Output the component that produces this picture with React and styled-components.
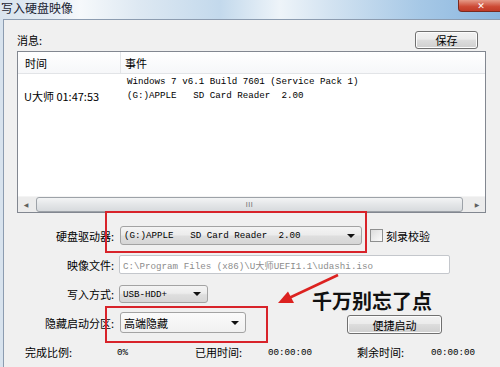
import styled, { createGlobalStyle } from 'styled-components'

const GlobalStyle = createGlobalStyle`
    body{
        margin: 0;
    }
    *{
        box-sizing: border-box;
    }
`

const cjk = `"Noto Sans CJK SC", "Noto Sans", sans-serif`
const mono = `"Liberation Mono", "Noto Sans CJK SC", monospace`

const Page = styled.div`
    position: relative;
    width: 500px;
    height: 367px;
    overflow: hidden;
    background: #d8e3ee;
    font-family: ${cjk};
    color: #000;
`

const TitleBar = styled.div`
    display: flex;
    justify-content: space-between;
    align-items: flex-start;
    height: 19px;
    background: linear-gradient(90deg, #d9e4ee 0%, #e4ecf4 10%, #f6f9fb 16%, #dde8f2 28%, #c3d9ec 44%, #eef4f9 56%, #d3e3f1 66%, #a6c8e6 84%, #8ab6df 100%);
`

const TitleText = styled.span`
    padding-left: 1px;
    font-size: 12px;
    line-height: 16px;
    color: #1c2533;
`

const CloseButton = styled.div`
    display: flex;
    justify-content: center;
    align-items: center;
    margin-right: -4px;
    width: 46px;
    height: 12px;
    border: 1px solid #7a2a1f;
    border-top: none;
    border-radius: 0 0 4px 4px;
    background: linear-gradient(#e59a88, #cd4a35 60%, #c03b28);
    color: #fff;
    font-family: "DejaVu Sans", sans-serif;
    font-size: 9px;
    font-weight: bold;
    line-height: 10px;
`

const Frame = styled.div`
    height: 348px;
    padding-left: 3px;
`

const Client = styled.div`
    height: 100%;
    padding: 11px 14px 0 13px;
    border-top: 1px solid #8c9cb0;
    border-left: 1px solid #8c9cb0;
    background: #f0f0f0;
`

const Toolbar = styled.div`
    display: flex;
    justify-content: space-between;
    align-items: center;
    height: 18px;
    font-size: 11px;
`

const Button = styled.button`
    display: flex;
    justify-content: center;
    align-items: center;
    margin: ${props => props.margin || '0'};
    padding: 0;
    width: ${props => props.width}px;
    height: ${props => props.height}px;
    border: 1px solid #707070;
    border-radius: 3px;
    background: linear-gradient(#f2f2f2 0%, #ebebeb 45%, #dddddd 50%, #cfcfcf 100%);
    box-shadow: inset 0 0 0 1px #fcfcfc;
    font-family: ${cjk};
    font-size: 11px;
    color: #000;
`

const ListBox = styled.div`
    display: flex;
    flex-direction: column;
    margin-top: 2px;
    height: 162px;
    border: 1px solid #828790;
    background: #fff;
`

const ListHeader = styled.div`
    display: flex;
    height: 22px;
    border-bottom: 1px solid #e2e4e7;
    background: linear-gradient(#ffffff, #f6f7f9);
`

const HeaderCell = styled.div`
    display: flex;
    align-items: center;
    width: ${props => props.width ? props.width + 'px' : 'auto'};
    flex: ${props => props.width ? 'none' : '1'};
    padding-left: ${props => props.pad}px;
    border-right: ${props => props.width ? '1px solid #e3e5e8' : 'none'};
    font-size: 11px;
`

const ListRows = styled.div`
    flex: 1;
    padding-top: 1px;
`

const ListRow = styled.div`
    display: flex;
    height: 14px;
    line-height: 14px;
`

const TimeCell = styled.div`
    width: 103px;
    padding-left: 6px;
    font-size: 11px;
`

const EventCell = styled.div`
    padding-left: 6px;
    font-family: ${mono};
    font-size: 9.2px;
    white-space: pre;
`

const ScrollBar = styled.div`
    display: flex;
    align-items: center;
    height: 16px;
    background: #ececec;
    border-top: 1px solid #f4f4f4;
`

const ScrollArrow = styled.div`
    display: flex;
    justify-content: center;
    align-items: center;
    width: 16px;
    height: 16px;
    color: #606060;
    font-family: "DejaVu Sans", sans-serif;
    font-size: 6px;
`

const ScrollThumb = styled.div`
    display: flex;
    justify-content: center;
    align-items: center;
    flex: 1;
    margin: 0 6px 0 2px;
    height: 15px;
    border: 1px solid #9da2a8;
    border-radius: 3px;
    background: linear-gradient(#f3f4f5, #e4e6e8 50%, #d7dadd);
    color: #6b6b6b;
    font-family: "Liberation Sans", sans-serif;
    font-size: 7px;
    letter-spacing: 0.5px;
`

const Form = styled.div`
    display: flex;
    flex-direction: column;
    margin-top: 13px;
`

const FormRow = styled.div`
    display: flex;
    align-items: center;
    margin-top: ${props => props.gap || 0}px;
    height: ${props => props.height}px;
`

const Label = styled.div`
    width: 97px;
    margin-right: ${props => props.space || 6}px;
    text-align: right;
    font-size: 11px;
    white-space: nowrap;
`

const Combo = styled.div`
    display: flex;
    justify-content: space-between;
    align-items: center;
    width: ${props => props.width}px;
    height: 100%;
    padding: 0 6px 0 3px;
    border: 1px solid #a3a3a3;
    border-radius: 3px;
    background: ${props => props.plain
        ? 'linear-gradient(#fafafa, #f1f1f1)'
        : 'linear-gradient(#f4f4f4 0%, #ececec 45%, #dedede 55%, #d6d6d6 100%)'};
`

const ComboText = styled.span`
    font-family: ${props => props.cjk ? cjk : mono};
    font-size: ${props => props.cjk ? '11px' : '9.2px'};
    white-space: pre;
`

const Caret = styled.span`
    width: 0;
    height: 0;
    border-left: 4px solid transparent;
    border-right: 4px solid transparent;
    border-top: 4px solid #111;
`

const PathInput = styled.div`
    display: flex;
    align-items: center;
    width: 331px;
    height: 100%;
    padding-left: 3px;
    border: 1px solid #c4c7cc;
    border-radius: 2px;
    background: #fff;
    color: #8c8c8c;
    font-family: ${mono};
    font-size: 9.2px;
    white-space: pre;
`

const CheckLabel = styled.label`
    display: flex;
    align-items: center;
    gap: 3px;
    margin-left: 8px;
    font-size: 11px;
`

const CheckBox = styled.span`
    width: 13px;
    height: 13px;
    border: 1px solid #8e8f8f;
    background: linear-gradient(135deg, #dcdcdc, #fbfbfb);
`

const Stats = styled.div`
    display: grid;
    grid-template-columns: 92px 78px 73px 89px 74px auto;
    align-items: center;
    margin-top: 11px;
    padding-left: 8px;
    height: 16px;
    font-size: 11px;
`

const StatValue = styled.span`
    font-family: ${mono};
    font-size: 9.2px;
`

const RedBox = styled.div`
    position: absolute;
    left: ${props => props.x}px;
    top: ${props => props.y}px;
    width: ${props => props.w}px;
    height: ${props => props.h}px;
    border: 2px solid #d8232a;
    pointer-events: none;
`

const Arrow = styled.svg`
    position: absolute;
    left: 0;
    top: 0;
    pointer-events: none;
`

const Note = styled.div`
    position: absolute;
    left: 312px;
    top: 290px;
    font-family: ${cjk};
    font-size: 20px;
    font-weight: bold;
    line-height: 22px;
    color: #111;
`

export default function App(){
    return (
        <>
            <GlobalStyle />
            <Page>
                <TitleBar>
                    <TitleText>写入硬盘映像</TitleText>
                    <CloseButton>✕</CloseButton>
                </TitleBar>
                <Frame>
                    <Client>
                        <Toolbar>
                            <span>消息:</span>
                            <Button width={63} height={18} margin="0 8px 0 0">保存</Button>
                        </Toolbar>
                        <ListBox>
                            <ListHeader>
                                <HeaderCell width={103} pad={7}>时间</HeaderCell>
                                <HeaderCell pad={4}>事件</HeaderCell>
                            </ListHeader>
                            <ListRows>
                                <ListRow>
                                    <TimeCell />
                                    <EventCell>Windows 7 v6.1 Build 7601 (Service Pack 1)</EventCell>
                                </ListRow>
                                <ListRow>
                                    <TimeCell>U大师 01:47:53</TimeCell>
                                    <EventCell>(G:)APPLE   SD Card Reader  2.00</EventCell>
                                </ListRow>
                            </ListRows>
                            <ScrollBar>
                                <ScrollArrow>◀</ScrollArrow>
                                <ScrollThumb>III</ScrollThumb>
                                <ScrollArrow>▶</ScrollArrow>
                            </ScrollBar>
                        </ListBox>
                        <Form>
                            <FormRow height={19}>
                                <Label>硬盘驱动器:</Label>
                                <Combo width={242}>
                                    <ComboText>(G:)APPLE   SD Card Reader  2.00</ComboText>
                                    <Caret />
                                </Combo>
                                <CheckLabel>
                                    <CheckBox />
                                    刻录校验
                                </CheckLabel>
                            </FormRow>
                            <FormRow height={19} gap={10}>
                                <Label space={5}>映像文件:</Label>
                                <PathInput>C:\Program Files (x86)\U大师UEFI1.1\udashi.iso</PathInput>
                            </FormRow>
                            <FormRow height={18} gap={11}>
                                <Label space={5}>写入方式:</Label>
                                <Combo width={89}>
                                    <ComboText>USB-HDD+</ComboText>
                                    <Caret />
                                </Combo>
                            </FormRow>
                            <FormRow height={21} gap={9}>
                                <Label>隐藏启动分区:</Label>
                                <Combo width={126} plain>
                                    <ComboText cjk>高端隐藏</ComboText>
                                    <Caret />
                                </Combo>
                                <Button width={95} height={19} margin="4px 0 0 101px">便捷启动</Button>
                            </FormRow>
                        </Form>
                        <Stats>
                            <span>完成比例:</span>
                            <StatValue>0%</StatValue>
                            <span>已用时间:</span>
                            <StatValue>00:00:00</StatValue>
                            <span>剩余时间:</span>
                            <StatValue>00:00:00</StatValue>
                        </Stats>
                    </Client>
                </Frame>
                <RedBox x={105} y={211} w={262} h={42} />
                <RedBox x={105} y={306} w={163} h={37} />
                <Arrow width="500" height="367" viewBox="0 0 500 367">
                    <line x1="338" y1="275" x2="289" y2="298" stroke="#dc2220" strokeWidth="2.5" />
                    <polygon points="278,303 288,291.5 294,303" fill="#dc2220" />
                </Arrow>
                <Note>千万别忘了点</Note>
            </Page>
        </>
    )
}
